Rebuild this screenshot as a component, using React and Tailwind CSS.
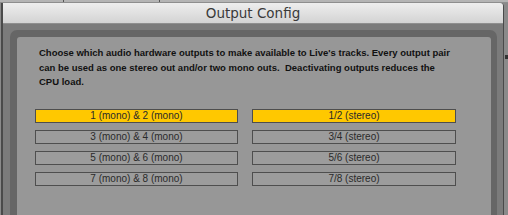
import React from "react";

const rows = [
  ["1 (mono) & 2 (mono)", "1/2 (stereo)", true],
  ["3 (mono) & 4 (mono)", "3/4 (stereo)", false],
  ["5 (mono) & 6 (mono)", "5/6 (stereo)", false],
  ["7 (mono) & 8 (mono)", "7/8 (stereo)", false],
];

function Btn({ label, on, w }) {
  return (
    <div
      className={
        "h-[14px] border border-[#4e4e4e] flex items-center justify-center text-[10px] leading-none text-[#2a2a2a] " +
        (on ? "bg-[#ffc800]" : "bg-[#9c9c9c]") +
        " " +
        w
      }
    >
      {label}
    </div>
  );
}

export default function App() {
  return (
    <div
      className="w-[508px] h-[215px] overflow-hidden bg-[#8a8a8a] flex flex-col"
      style={{ fontFamily: '"Liberation Sans", Arial, sans-serif' }}
    >
      <div className="h-[3px] shrink-0 bg-[#b4b4b4] border-b border-[#8e8e8e] flex">
        <div className="w-[63px]" />
        <div className="w-px bg-[#555]" />
        <div className="w-[95px]" />
        <div className="w-px bg-[#555]" />
      </div>
      <div className="flex flex-1 min-h-0">
        <div className="ml-[1px] w-[503px] flex flex-col border-l-2 border-r border-[#4a4a4a] rounded-tr-[4px] bg-[#7b7b7b]">
          <div className="h-[21px] shrink-0 bg-gradient-to-b from-[#eeeeee] to-[#d3d3d3] border-b border-[#8f8f8f] rounded-tr-[3px] flex items-center justify-center">
            <span
              className="text-[13.5px] text-[#3a3a3a] leading-none mt-[1px]"
              style={{ fontFamily: '"DejaVu Sans", sans-serif' }}
            >
              Output Config
            </span>
          </div>
          <div className="flex-1 pt-[6px] pl-[7px] pr-[6px] flex">
            <div className="flex-1 bg-[#666666] rounded-tl-[7px] rounded-tr-[7px] pt-[7px] pl-[7px] pr-[6px] flex">
              <div className="flex-1 bg-[#979797] rounded-tl-[3px] rounded-tr-[3px]">
                <p className="pl-[22px] pt-[9px] pr-[4px] text-[9.5px] font-bold leading-[14.5px] text-[#111] whitespace-nowrap">
                  Choose which audio hardware outputs to make available to Live's tracks. Every output pair
                  <br />
                  can be used as one stereo out and/or two mono outs.&nbsp; Deactivating outputs reduces the
                  <br />
                  CPU load.
                </p>
                <div className="pl-[18px] pt-[19px] flex flex-col gap-[7px]">
                  {rows.map(([a, b, on]) => (
                    <div key={a} className="flex gap-[14px]">
                      <Btn label={a} on={on} w="w-[203px]" />
                      <Btn label={b} on={on} w="w-[204px]" />
                    </div>
                  ))}
                </div>
              </div>
            </div>
          </div>
        </div>
        <div className="flex-1 relative">
          <div className="absolute left-[1px] top-[52px] w-[3px] h-[4px] bg-[#333]" />
        </div>
      </div>
    </div>
  );
}
